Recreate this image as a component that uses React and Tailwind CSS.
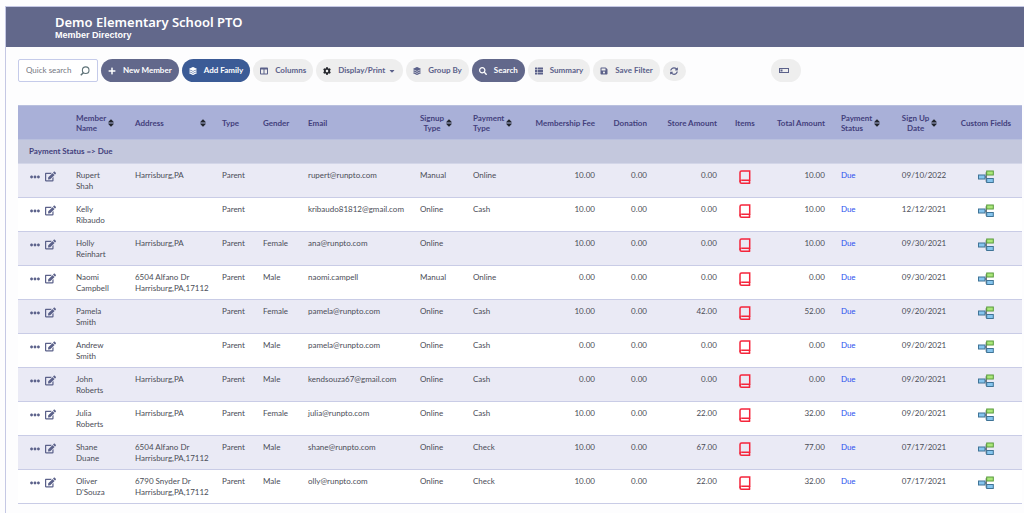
import React, { useState } from "react";
import {
  FaPlus,
  FaLayerGroup,
  FaColumns,
  FaCog,
  FaCaretDown,
  FaSearch,
  FaThList,
  FaSave,
  FaSyncAlt,
  FaEllipsisH,
  FaEdit,
} from "react-icons/fa";

const columns = [
  { key: "actions", label: "", width: 50 },
  { key: "name", label: "Member\nName", width: 59, sort: true },
  { key: "address", label: "Address", width: 87, sort: true, spread: true },
  { key: "type", label: "Type", width: 41 },
  { key: "gender", label: "Gender", width: 45 },
  { key: "email", label: "Email", width: 112 },
  { key: "signup", label: "Signup\nType", width: 53, sort: true, align: "center" },
  { key: "payment", label: "Payment\nType", width: 61, sort: true },
  { key: "fee", label: "Membership Fee", width: 77, align: "right" },
  { key: "donation", label: "Donation", width: 52, align: "right" },
  { key: "store", label: "Store Amount", width: 70, align: "right" },
  { key: "items", label: "Items", width: 40, align: "center" },
  { key: "total", label: "Total Amount", width: 68, align: "right" },
  { key: "status", label: "Payment\nStatus", width: 61, sort: true },
  { key: "date", label: "Sign Up\nDate", width: 56, sort: true, align: "center" },
  { key: "custom", label: "Custom Fields", width: 72, align: "center" },
];

const totalWidth = columns.reduce((sum, c) => sum + c.width, 0);

const members = [
  { first: "Rupert", last: "Shah", address: ["Harrisburg,PA"], gender: "", email: "rupert@runpto.com", signup: "Manual", payment: "Online", fee: "10.00", store: "0.00", total: "10.00", date: "09/10/2022" },
  { first: "Kelly", last: "Ribaudo", address: [], gender: "", email: "kribaudo81812@gmail.com", signup: "Online", payment: "Cash", fee: "10.00", store: "0.00", total: "10.00", date: "12/12/2021" },
  { first: "Holly", last: "Reinhart", address: ["Harrisburg,PA"], gender: "Female", email: "ana@runpto.com", signup: "Online", payment: "", fee: "10.00", store: "0.00", total: "10.00", date: "09/30/2021" },
  { first: "Naomi", last: "Campbell", address: ["6504 Alfano Dr", "Harrisburg,PA,17112"], gender: "Male", email: "naomi.campell", signup: "Manual", payment: "Online", fee: "0.00", store: "0.00", total: "0.00", date: "09/30/2021" },
  { first: "Pamela", last: "Smith", address: [], gender: "Female", email: "pamela@runpto.com", signup: "Online", payment: "Cash", fee: "10.00", store: "42.00", total: "52.00", date: "09/20/2021" },
  { first: "Andrew", last: "Smith", address: [], gender: "Male", email: "pamela@runpto.com", signup: "Online", payment: "Cash", fee: "0.00", store: "0.00", total: "0.00", date: "09/20/2021" },
  { first: "John", last: "Roberts", address: ["Harrisburg,PA"], gender: "Male", email: "kendsouza67@gmail.com", signup: "Online", payment: "Cash", fee: "0.00", store: "0.00", total: "0.00", date: "09/20/2021" },
  { first: "Julia", last: "Roberts", address: ["Harrisburg,PA"], gender: "Female", email: "julia@runpto.com", signup: "Online", payment: "Cash", fee: "10.00", store: "22.00", total: "32.00", date: "09/20/2021" },
  { first: "Shane", last: "Duane", address: ["6504 Alfano Dr", "Harrisburg,PA,17112"], gender: "Male", email: "shane@runpto.com", signup: "Online", payment: "Check", fee: "10.00", store: "67.00", total: "77.00", date: "07/17/2021" },
  { first: "Oliver", last: "D'Souza", address: ["6790 Snyder Dr", "Harrisburg,PA,17112"], gender: "Male", email: "olly@runpto.com", signup: "Online", payment: "Check", fee: "10.00", store: "22.00", total: "32.00", date: "07/17/2021" },
];

const alignText = { left: "text-left", center: "text-center", right: "text-right" };

const tones = {
  light: "bg-[#eeeeee] text-[#5b618a]",
  slate: "bg-[#62688b] text-white",
  blue: "bg-[#3b5b96] text-white",
};

function ToolButton({ icon, tone = "light", children }) {
  return (
    <button
      type="button"
      className={`flex h-[23px] shrink-0 items-center gap-[7px] whitespace-nowrap rounded-full px-[7px] font-bold ${tones[tone]}`}
    >
      {icon}
      {children}
    </button>
  );
}

function SortIcon() {
  return (
    <svg width="6" height="8" viewBox="0 0 6 8" fill="#23262e" className="shrink-0">
      <path d="M2.6 .4h.8L5.7 3v.6H.3V3zM.3 4.4h5.4V5L3.4 7.6h-.8L.3 5z" />
    </svg>
  );
}

function BookIcon() {
  return (
    <svg width="12" height="14" viewBox="0 0 12 14" fill="none" stroke="#f5253b" strokeWidth="1.5">
      <path d="M2.5 .9h8.2v9.4H2.4M2.5 .9C1.5 .9 1 1.5 1 2.4v9.3c0 1 .5 1.5 1.5 1.5h8.7" />
      <path d="M1.1 11.7c0-.9.5-1.4 1.3-1.4M10.5 10.3v2.9" />
    </svg>
  );
}

function FieldsIcon() {
  return (
    <svg width="16" height="14" viewBox="0 0 16 14">
      <path d="M6 7h2.5M10 3H8.3v8H10" fill="none" stroke="#6c7078" strokeWidth="1.3" />
      <rect x=".5" y="5" width="6.5" height="4" fill="#86c5ee" stroke="#3f7396" />
      <rect x="8.7" y="1" width="6.6" height="4" fill="#a9e678" stroke="#599a3c" />
      <rect x="8.7" y="8.5" width="6.6" height="4" fill="#86c5ee" stroke="#3f7396" />
    </svg>
  );
}

function HeaderCell({ col }) {
  const align = col.align || "left";
  if (!col.sort) {
    return <th className={`whitespace-nowrap px-2 font-bold ${alignText[align]}`}>{col.label}</th>;
  }
  return (
    <th className="px-2 font-bold">
      <button
        type="button"
        className={`flex items-center gap-[2px] whitespace-pre ${alignText[align]} ${col.spread ? "w-full justify-between" : ""}`}
      >
        <span>{col.label}</span>
        <SortIcon />
      </button>
    </th>
  );
}

function MemberRow({ m }) {
  return (
    <tr className="h-[34px] border-b border-[#c9cce6] align-top odd:bg-white even:bg-[#eaeaf5] [&>td]:px-2 [&>td]:pt-[6px]">
      <td>
        <div className="flex items-center gap-[5px] pl-1 pt-px text-[#5b618a]">
          <button type="button" aria-label="More actions"><FaEllipsisH className="size-[10px]" /></button>
          <button type="button" aria-label="Edit member"><FaEdit className="size-[11px]" /></button>
        </div>
      </td>
      <td>{m.first}<br />{m.last}</td>
      <td className="whitespace-nowrap">
        {m.address.map((line) => <div key={line}>{line}</div>)}
      </td>
      <td>Parent</td>
      <td>{m.gender}</td>
      <td>{m.email}</td>
      <td>{m.signup}</td>
      <td>{m.payment}</td>
      <td className="text-right">{m.fee}</td>
      <td className="text-right">0.00</td>
      <td className="text-right">{m.store}</td>
      <td>
        <button type="button" aria-label="Items" className="mx-auto block"><BookIcon /></button>
      </td>
      <td className="text-right">{m.total}</td>
      <td><a href="#due" className="text-[#2a4fee]">Due</a></td>
      <td className="whitespace-nowrap">{m.date}</td>
      <td>
        <button type="button" aria-label="Custom fields" className="mx-auto block"><FieldsIcon /></button>
      </td>
    </tr>
  );
}

function App() {
  const [search, setSearch] = useState("");

  return (
    <div className="min-h-screen bg-[#fdfdfe] pl-[5px] pt-[6px] font-['Lato','Noto_Sans',sans-serif] text-[8px] leading-[11px] text-[#4b4d57]">
      <div className="min-h-[507px] border-l border-t border-[#c5c8e4]">
        <header className="flex h-10 flex-col justify-center bg-[#62688b] pl-[49px] text-white">
          <h1 className="font-['Noto_Sans',sans-serif] text-[13px] font-semibold leading-4">Demo Elementary School PTO</h1>
          <h2 className="font-['Liberation_Sans',sans-serif] text-[9px] font-bold leading-[10px]">Member Directory</h2>
        </header>

        <div className="flex items-center gap-[3px] pl-3 pt-3">
          <label className="flex h-[23px] w-20 items-center rounded-xs border border-[#c5cbea] bg-white px-[7px]">
            <input
              type="text"
              value={search}
              onChange={(e) => setSearch(e.target.value)}
              placeholder="Quick search"
              aria-label="Quick search"
              className="w-full min-w-0 outline-none placeholder:text-[#74777f]"
            />
            <svg width="10" height="10" viewBox="0 0 10 10" fill="none" stroke="#5f7378" className="shrink-0">
              <circle cx="5.7" cy="4.2" r="3.3" strokeWidth="1.1" />
              <path d="M3.3 6.7.8 9.3" strokeWidth="1.5" />
            </svg>
          </label>
          <ToolButton tone="slate" icon={<FaPlus className="size-2" />}>New Member</ToolButton>
          <ToolButton tone="blue" icon={<FaLayerGroup className="size-2" />}>Add Family</ToolButton>
          <ToolButton icon={<FaColumns className="size-2" />}>Columns</ToolButton>
          <ToolButton icon={<FaCog className="size-2 text-[#24262c]" />}>
            <span className="flex items-center gap-[3px]">Display/Print <FaCaretDown className="size-2" /></span>
          </ToolButton>
          <ToolButton icon={<FaLayerGroup className="size-2" />}>Group By</ToolButton>
          <ToolButton tone="slate" icon={<FaSearch className="size-2" />}>Search</ToolButton>
          <ToolButton icon={<FaThList className="size-2" />}>Summary</ToolButton>
          <ToolButton icon={<FaSave className="size-2" />}>Save Filter</ToolButton>
          <button type="button" aria-label="Refresh" className="flex h-5 w-[23px] items-center justify-center rounded-full bg-[#eeeeee] text-[#5b618a]">
            <FaSyncAlt className="size-2" />
          </button>
          <button type="button" aria-label="Toggle view" className="ml-[82px] flex h-[23px] w-[30px] items-center rounded-full bg-[#eeeeee] pl-2">
            <svg width="10" height="5" viewBox="0 0 10 5" fill="none" stroke="#5b618a">
              <rect x=".5" y=".5" width="9" height="4" />
              <path d="M1.5 2.5h2" strokeWidth="2" />
            </svg>
          </button>
        </div>

        <div className="pb-3 pl-3 pr-[2px] pt-[23px]">
          <table className="w-full table-fixed border-collapse">
            <colgroup>
              {columns.map((c) => (
                <col key={c.key} style={{ width: `${(c.width / totalWidth) * 100}%` }} />
              ))}
            </colgroup>
            <thead>
              <tr className="h-[34px] border-b border-t border-[#b9c0de] bg-[#a9b0d8] leading-[10px] text-[#433f7c]">
                {columns.map((c) => <HeaderCell key={c.key} col={c} />)}
              </tr>
            </thead>
            <tbody>
              <tr className="h-6 border-b border-[#d3d6e8] bg-[#c4c8dd] text-[#433f7c]">
                <td colSpan={16} className="pl-[11px] font-bold">Payment Status =&gt; Due</td>
              </tr>
              {members.map((m) => <MemberRow key={m.first} m={m} />)}
            </tbody>
          </table>
        </div>
      </div>
    </div>
  );
}

export default App;
